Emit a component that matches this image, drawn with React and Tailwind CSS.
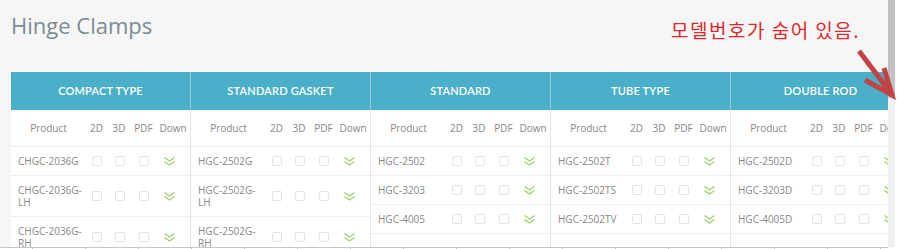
import React from "react";

const sections = [
  {
    title: "COMPACT TYPE",
    rows: [["CHGC-2036G"], ["CHGC-2036G-", "LH"], ["CHGC-2036G-", "RH"]],
  },
  {
    title: "STANDARD GASKET",
    rows: [["HGC-2502G"], ["HGC-2502G-", "LH"], ["HGC-2502G-", "RH"]],
  },
  {
    title: "STANDARD",
    rows: [["HGC-2502"], ["HGC-3203"], ["HGC-4005"], [""]],
  },
  {
    title: "TUBE TYPE",
    rows: [["HGC-2502T"], ["HGC-2502TS"], ["HGC-2502TV"], [""]],
  },
  {
    title: "DOUBLE ROD",
    rows: [["HGC-2502D"], ["HGC-3203D"], ["HGC-4005D"], [""]],
  },
];

const bodyFont = { fontFamily: '"Open Sans", "Noto Sans", sans-serif' };

function Checkbox() {
  return <span className="block w-[10px] h-[10px] rounded-[2px] border border-[#e3e3e3] bg-white" />;
}

function DownIcon() {
  return (
    <svg width="13" height="11" viewBox="0 0 13 11" fill="none">
      <path d="M1.5 1.5 L6.5 5 L11.5 1.5" stroke="#9fd06c" strokeWidth="1.3" />
      <path d="M1.5 5.5 L6.5 9 L11.5 5.5" stroke="#9fd06c" strokeWidth="1.3" />
    </svg>
  );
}

function Section({ section }) {
  return (
    <div className="shrink-0 w-[180px] flex flex-col">
      {/* cabecera azul */}
      <div
        className="h-[38px] flex items-center justify-center bg-[#4aafc8] border-r border-[#8fcfe0] text-white text-[11px] font-semibold tracking-[0.2px]"
        style={{ fontFamily: '"Lato", "Open Sans", sans-serif' }}
      >
        {section.title}
      </div>

      <div className="bg-white border-r border-[#e6e6e6] text-[10px] text-[#888]" style={bodyFont}>
        <div className="h-[37px] flex items-center border-b border-[#eeeeee]">
          <div className="w-[75px] text-center">Product</div>
          <div className="w-[21px] text-center">2D</div>
          <div className="w-[24px] text-center">3D</div>
          <div className="w-[25px] text-center">PDF</div>
          <div className="w-[34px] text-center whitespace-nowrap">Down</div>
        </div>

        {section.rows.map((lines, i) => (
          <div key={i} className="flex items-center border-b border-[#eeeeee] py-2">
            <div className="w-[75px] pl-[7px] leading-[12px] whitespace-nowrap">
              {lines.map((l, j) => (
                <div key={j}>{l || "\u00a0"}</div>
              ))}
            </div>
            {lines[0] !== "" && (
              <>
                <div className="w-[21px] flex justify-center pl-[1px]">
                  <Checkbox />
                </div>
                <div className="w-[24px] flex justify-center pl-[1px]">
                  <Checkbox />
                </div>
                <div className="w-[25px] flex justify-center">
                  <Checkbox />
                </div>
                <div className="w-[34px] flex pl-[7px]">
                  <DownIcon />
                </div>
              </>
            )}
          </div>
        ))}
      </div>
    </div>
  );
}

export default function App() {
  return (
    <div className="relative flex w-[923px] h-[249px] bg-white overflow-hidden">
      <div className="flex flex-col w-[888px] shrink-0">
        <div className="h-[247px] bg-[#f6f6f6] overflow-hidden">
          <h1
            className="h-[72px] pt-[10px] pl-[11px] text-[22px] leading-[30px] text-[#7b8b94]"
            style={bodyFont}
          >
            Hinge Clamps
          </h1>

          <div className="ml-[11px] flex w-max">
            {sections.map((s) => (
              <Section key={s.title} section={s} />
            ))}
          </div>
        </div>

        <div className="h-[2px] border-t border-[#c6c6d0] flex pl-[32px] gap-[52px]">
          {Array.from({ length: 17 }).map((_, i) => (
            <span key={i} className="w-px h-[1px] bg-[#c6c6d0]" />
          ))}
        </div>
      </div>

      {/* barra de scroll */}
      <div className="w-[7px] h-[247px] bg-[#f0f0f0] shrink-0">
        <div className="h-[98px] bg-[#c1c1c1]" />
      </div>

      {/* anotación */}
      <div
        className="absolute left-[671px] top-[16px] text-[19px] leading-[28px] tracking-[1.5px] text-[#e2262a] whitespace-nowrap"
        style={{ fontFamily: '"Noto Sans CJK KR", "Noto Sans", sans-serif' }}
      >
        모델번호가 숨어 있음.
      </div>

      <svg className="absolute left-[850px] top-[44px]" width="50" height="56" viewBox="0 0 50 56" fill="none">
        <path d="M9 7 L40 48" stroke="#c44243" strokeWidth="5" />
        <path d="M15 36 L42 51 L34 24" stroke="#c44243" strokeWidth="5" strokeLinejoin="miter" />
      </svg>
    </div>
  );
}
